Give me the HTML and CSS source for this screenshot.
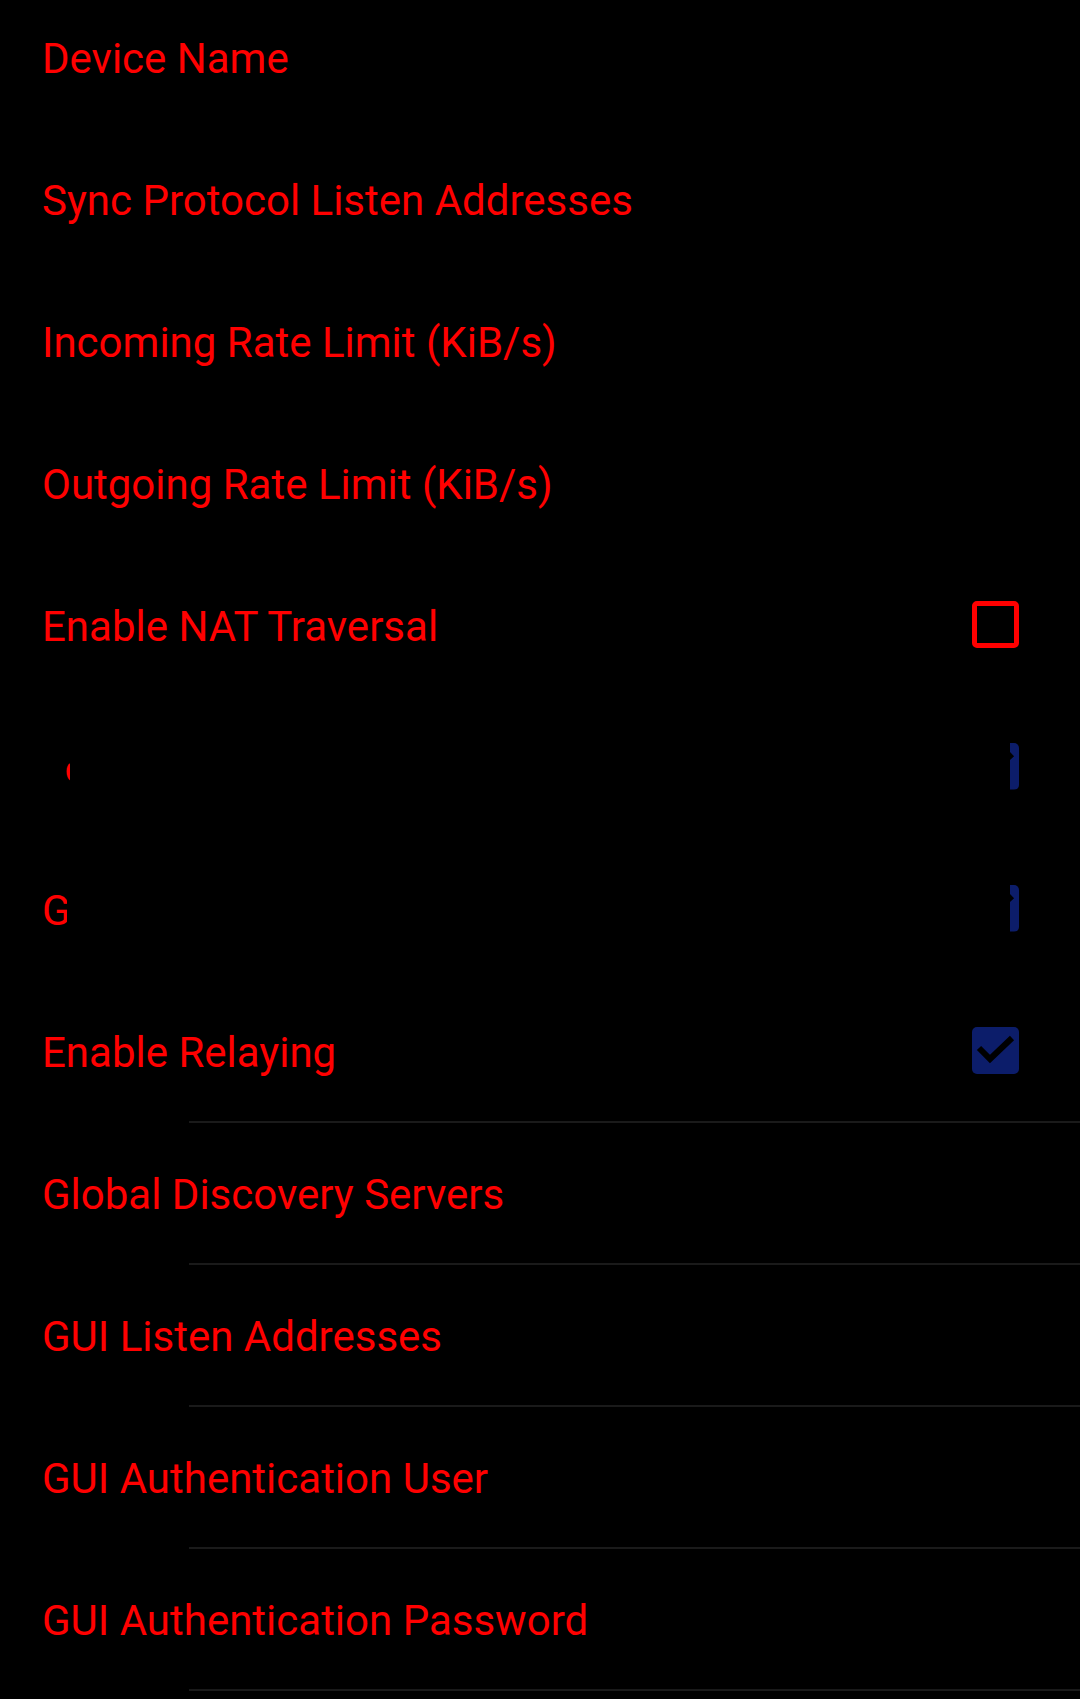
FILE: index.html
```html
<!DOCTYPE html>
<html>
<head>
<meta charset="utf-8">
<link rel="stylesheet" href="styles.css">
</head>
<body>
<div class="list">
  <div class="row"><span class="label">Device Name</span></div>
  <div class="row"><span class="label">Sync Protocol Listen Addresses</span></div>
  <div class="row"><span class="label">Incoming Rate Limit (KiB/s)</span></div>
  <div class="row"><span class="label">Outgoing Rate Limit (KiB/s)</span></div>
  <div class="row"><span class="label">Enable NAT Traversal</span><span class="box box-off"></span></div>
  <div class="row"><span class="label clip-local">Local Discovery</span><span class="box box-on clip-box"><svg viewBox="0 0 47 47" width="47" height="47"><path d="M7 21 L18 32 L40 11" fill="none" stroke="#000" stroke-width="6"/></svg></span></div>
  <div class="row"><span class="label clip-global">Global Discovery</span><span class="box box-on clip-box"><svg viewBox="0 0 47 47" width="47" height="47"><path d="M7 21 L18 32 L40 11" fill="none" stroke="#000" stroke-width="6"/></svg></span></div>
  <div class="row divided"><span class="label">Enable Relaying</span><span class="box box-on"><svg viewBox="0 0 47 47" width="47" height="47"><path d="M7 21 L18 32 L40 11" fill="none" stroke="#000" stroke-width="6"/></svg></span></div>
  <div class="row divided"><span class="label">Global Discovery Servers</span></div>
  <div class="row divided"><span class="label">GUI Listen Addresses</span></div>
  <div class="row divided"><span class="label">GUI Authentication User</span></div>
  <div class="row divided"><span class="label">GUI Authentication Password</span></div>
</div>
</body>
</html>
```
FILE: styles.css
```css
html, body {
  margin: 0;
  padding: 0;
  background: #000;
}
body {
  width: 1080px;
  height: 1699px;
  overflow: hidden;
  font-family: Roboto, "Noto Sans", sans-serif;
}
.list {
  margin-top: -13px;
  display: flex;
  flex-direction: column;
}
.row {
  position: relative;
  height: 142px;
  box-sizing: border-box;
  display: flex;
  align-items: center;
  justify-content: space-between;
  padding: 0 61px 0 42px;
}
.label {
  color: #ff0000;
  font-size: 42px;
  line-height: normal;
}
.divided::after {
  content: "";
  position: absolute;
  left: 189px;
  right: 0;
  bottom: 0;
  height: 2px;
  background: #1a1a1a;
}
.box {
  width: 47px;
  height: 47px;
  box-sizing: border-box;
  border-radius: 5px;
  display: block;
  margin-top: -4px;
}
.box svg {
  display: block;
}
.box-off {
  border: 5px solid #ff0000;
}
.box-on {
  background: #0c1d6a;
}
.clip-box {
  clip-path: inset(0 0 0 38px);
}
.clip-local {
  clip-path: inset(20px calc(100% - 28px) 12px 24px);
}
.clip-global {
  clip-path: inset(0 calc(100% - 25px) 0 0);
}
```
